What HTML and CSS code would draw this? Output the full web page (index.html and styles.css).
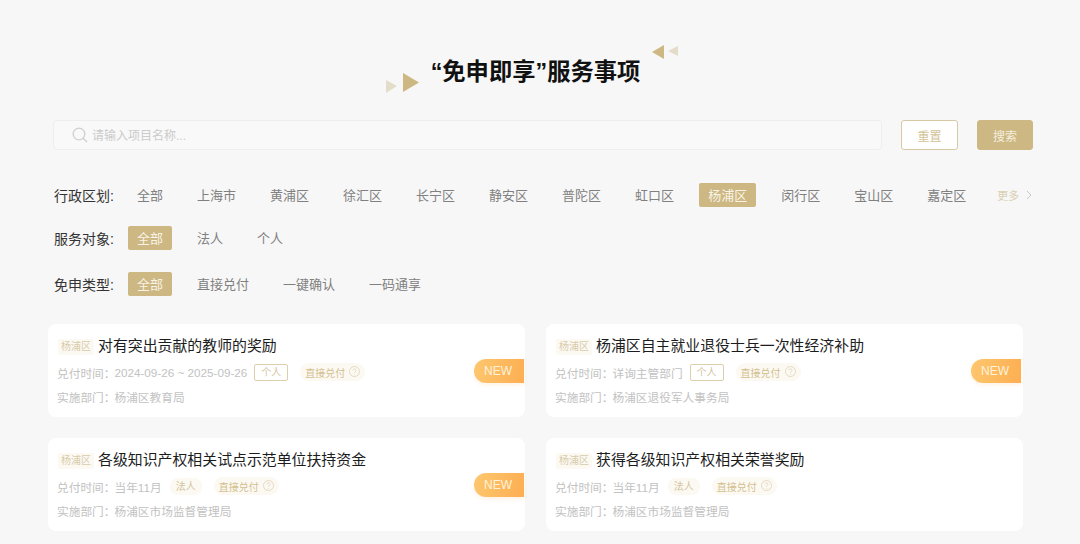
FILE: index.html
```html
<!DOCTYPE html>
<html lang="zh-CN">
<head>
<meta charset="utf-8">
<title>免申即享服务事项</title>
<link rel="stylesheet" href="styles.css">
</head>
<body>
<header class="page-head">
  <svg class="deco deco-left" width="34" height="20" viewBox="0 0 34 20"><polygon points="0,7 11,13 0,20" fill="#e3dcc8"/><polygon points="17,0 33,9.500 17,19" fill="#cdb782"/></svg>
  <h1 class="page-title"><span class="quote">“</span>免申即享<span class="quote">”</span>服务事项</h1>
  <svg class="deco deco-right" width="27" height="15" viewBox="0 0 27 15"><polygon points="12,0 0,7 12,14" fill="#cdb782"/><polygon points="26,1 16,6 26,11" fill="#e3dcc8"/></svg>
</header>

<section class="search-row">
  <div class="search-box">
    <svg class="search-icon" width="16" height="16" viewBox="0 0 16 16" fill="none" stroke="#cfcfcf" stroke-width="1.300"><circle cx="7" cy="7" r="5.800"/><path d="M11.200 11.200 15 15"/></svg>
    <span class="placeholder">请输入项目名称...</span>
  </div>
  <button class="btn btn-reset">重置</button>
  <button class="btn btn-search">搜索</button>
</section>

<section class="filters">
  <div class="filter-row">
    <span class="filter-label">行政区划:</span>
    <div class="tags">
      <span class="tag">全部</span><span class="tag">上海市</span><span class="tag">黄浦区</span><span class="tag">徐汇区</span><span class="tag">长宁区</span><span class="tag">静安区</span><span class="tag">普陀区</span><span class="tag">虹口区</span><span class="tag active">杨浦区</span><span class="tag">闵行区</span><span class="tag">宝山区</span><span class="tag">嘉定区</span>
      <span class="more">更多<svg class="chev" width="6" height="10" viewBox="0 0 6 10" fill="none" stroke="#c9c9c9" stroke-width="1"><path d="M1 1l4 4-4 4"/></svg></span>
    </div>
  </div>
  <div class="filter-row row-2">
    <span class="filter-label">服务对象:</span>
    <div class="tags"><span class="tag active">全部</span><span class="tag">法人</span><span class="tag">个人</span></div>
  </div>
  <div class="filter-row row-3">
    <span class="filter-label">免申类型:</span>
    <div class="tags"><span class="tag active">全部</span><span class="tag">直接兑付</span><span class="tag">一键确认</span><span class="tag">一码通享</span></div>
  </div>
</section>

<section class="cards">
  <article class="card">
    <div class="card-title"><span class="area">杨浦区</span><span class="name">对有突出贡献的教师的奖励</span></div>
    <div class="meta"><span>兑付时间：</span><span class="val">2024-09-26 ~ 2025-09-26</span><span class="pill-outline">个人</span><span class="pill-type">直接兑付<svg class="help" width="11" height="11" viewBox="0 0 11 11"><circle cx="5.500" cy="5.500" r="5" fill="none" stroke="#ddd3b8" stroke-width=".8"/><path d="M4 4.300a1.500 1.500 0 1 1 2.300 1.300c-.6.300-.8.600-.8 1.100M5.500 8v.7" fill="none" stroke="#ddd3b8" stroke-width=".8"/></svg></span></div>
    <div class="meta meta-2"><span>实施部门：</span><span class="val">杨浦区教育局</span></div>
    <span class="new">NEW</span>
  </article>
  <article class="card">
    <div class="card-title"><span class="area">杨浦区</span><span class="name">杨浦区自主就业退役士兵一次性经济补助</span></div>
    <div class="meta"><span>兑付时间：</span><span class="val">详询主管部门</span><span class="pill-outline">个人</span><span class="pill-type">直接兑付<svg class="help" width="11" height="11" viewBox="0 0 11 11"><circle cx="5.500" cy="5.500" r="5" fill="none" stroke="#ddd3b8" stroke-width=".8"/><path d="M4 4.300a1.500 1.500 0 1 1 2.300 1.300c-.6.300-.8.600-.8 1.100M5.500 8v.7" fill="none" stroke="#ddd3b8" stroke-width=".8"/></svg></span></div>
    <div class="meta meta-2"><span>实施部门：</span><span class="val">杨浦区退役军人事务局</span></div>
    <span class="new new-shift">NEW</span>
  </article>
  <article class="card">
    <div class="card-title"><span class="area">杨浦区</span><span class="name">各级知识产权相关试点示范单位扶持资金</span></div>
    <div class="meta"><span>兑付时间：</span><span class="val">当年11月</span><span class="pill-soft">法人</span><span class="pill-type">直接兑付<svg class="help" width="11" height="11" viewBox="0 0 11 11"><circle cx="5.500" cy="5.500" r="5" fill="none" stroke="#ddd3b8" stroke-width=".8"/><path d="M4 4.300a1.500 1.500 0 1 1 2.300 1.300c-.6.300-.8.600-.8 1.100M5.500 8v.7" fill="none" stroke="#ddd3b8" stroke-width=".8"/></svg></span></div>
    <div class="meta meta-2"><span>实施部门：</span><span class="val">杨浦区市场监督管理局</span></div>
    <span class="new">NEW</span>
  </article>
  <article class="card">
    <div class="card-title"><span class="area">杨浦区</span><span class="name">获得各级知识产权相关荣誉奖励</span></div>
    <div class="meta"><span>兑付时间：</span><span class="val">当年11月</span><span class="pill-soft">法人</span><span class="pill-type">直接兑付<svg class="help" width="11" height="11" viewBox="0 0 11 11"><circle cx="5.500" cy="5.500" r="5" fill="none" stroke="#ddd3b8" stroke-width=".8"/><path d="M4 4.300a1.500 1.500 0 1 1 2.300 1.300c-.6.300-.8.600-.8 1.100M5.500 8v.7" fill="none" stroke="#ddd3b8" stroke-width=".8"/></svg></span></div>
    <div class="meta meta-2"><span>实施部门：</span><span class="val">杨浦区市场监督管理局</span></div>
  </article>
</section>
</body>
</html>
```

FILE: styles.css
```css
* { box-sizing: border-box; }
html, body { margin: 0; padding: 0; }
body {
  width: 1080px;
  height: 544px;
  overflow: hidden;
  background: #f7f7f7;
  font-family: "Liberation Sans", "Noto Sans CJK SC", sans-serif;
  color: #333;
}
.page-head {
  position: relative;
  padding-top: 56px;
  height: 88px;
}
.page-title {
  margin: 0;
  padding-right: 9px;
  font-size: 23.300px;
  line-height: 32px;
  font-weight: 700;
  color: #111;
  text-align: center;
}
.quote { font-family: "Liberation Sans", sans-serif; }
.deco { position: absolute; }
.deco-left { left: 386px; top: 73px; }
.deco-right { left: 652px; top: 45px; }

.search-row {
  display: flex;
  gap: 19px;
  margin-top: 32px;
  padding: 0 47px 0 53px;
  height: 30px;
}
.search-box {
  flex: 1;
  display: flex;
  align-items: center;
  padding-left: 18px;
  padding-bottom: 1px;
  background: #f9f9f9;
  border: 1px solid #eeeeee;
  border-radius: 4px;
}
.search-icon { margin-right: 4px; }
.placeholder { font-size: 12px; color: #cbcbcb; }
.btn {
  height: 30px;
  padding: 0;
  border-radius: 3px;
  font: inherit;
  font-size: 12px;
}
.btn-reset {
  width: 57px;
  background: #fff;
  border: 1px solid #d8c9a4;
  color: #d3c498;
}
.btn-search {
  width: 56px;
  background: #cdb782;
  border: 1px solid #cdb782;
  color: #f5efdf;
}

.filters { margin-top: 33px; padding-left: 54px; }
.filter-row { display: flex; align-items: center; height: 24px; }
.row-2 { margin-top: 19px; }
.row-3 { margin-top: 22px; }
.filter-label {
  width: 74px;
  flex: none;
  font-size: 14px;
  color: #333;
}
.tags { display: flex; align-items: center; gap: 16px; }
.tag {
  height: 24px;
  line-height: 25px;
  padding: 0 9px;
  font-size: 13px;
  color: #808080;
  border-radius: 2px;
}
.tag.active { background: #cdb782; color: #f8f3e6; }
.more {
  display: flex;
  align-items: center;
  margin-left: 6px;
  font-size: 11px;
  color: #dacfb3;
}
.chev { margin-left: 7px; }

.cards {
  display: grid;
  grid-template-columns: 477px 477px;
  column-gap: 21px;
  row-gap: 21px;
  margin-top: 28px;
  padding-left: 48px;
}
.card {
  position: relative;
  height: 93px;
  padding: 9px 10px 0 9px;
  background: #fff;
  border-radius: 8px;
}
.card-title { display: flex; align-items: center; height: 22px; padding-left: 1px; }
.area {
  height: 16px;
  line-height: 16px;
  margin-top: 5px;
  padding: 0 3px;
  font-size: 10px;
  color: #d8cbaa;
  background: #fcf9f3;
  border-radius: 2px;
}
.name { margin-left: 4px; font-size: 14.900px; color: #1c1c1c; }
.meta {
  display: flex;
  align-items: center;
  height: 20px;
  margin-top: 7px;
  font-size: 11.700px;
  color: #c2c2c2;
}
.meta-2 { margin-top: 4px; }
.val { margin-left: -1px; }
.pill-outline {
  height: 17px;
  line-height: 16px;
  margin-left: 7px;
  padding: 0 6px;
  font-size: 10px;
  color: #d3c49d;
  border: 1px solid #dccfa9;
  border-radius: 2px;
}
.pill-soft {
  height: 17px;
  line-height: 18px;
  margin-left: 8px;
  padding: 0 6px;
  font-size: 10px;
  color: #d3c49d;
  background: #fcf9f3;
  border-radius: 8px;
}
.pill-type {
  display: flex;
  align-items: center;
  height: 18px;
  margin-left: 12px;
  padding: 1px 5px 0;
  font-size: 10px;
  color: #d3bf8e;
  background: #fcf9f3;
  border-radius: 9px;
}
.help { margin-left: 4px; margin-top: -2px; }
.new {
  position: absolute;
  top: 35px;
  right: 1px;
  width: 50px;
  height: 24px;
  line-height: 24px;
  padding-left: 10px;
  font-size: 12px;
  color: #fff3dc;
  background: linear-gradient(100deg, #fdc76e, #fdae52);
  border-radius: 12px 0 0 12px;
  box-shadow: 0 2px 4px rgba(252, 168, 76, .15);
}
.new-shift { right: 2px; }
```
